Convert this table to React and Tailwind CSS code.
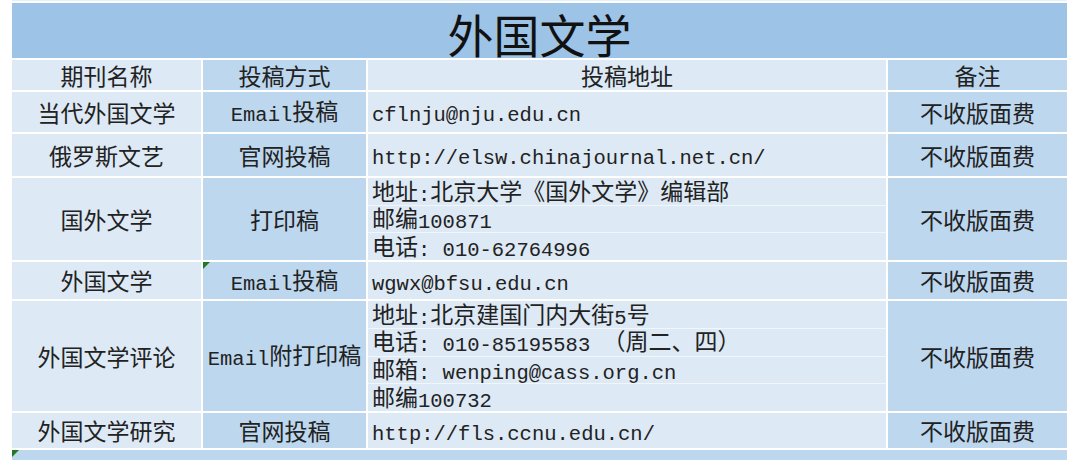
import React from "react";

const CJK = "font-['Noto_Sans_CJK_SC',sans-serif]";

// split ascii runs into the mono face, CJK stays in the CJK face
function Mixed({ text }) {
  return text.split(/([\x20-\x7e]+)/).map((s, i) =>
    /^[\x20-\x7e]+$/.test(s) ? (
      <span key={i} className="relative top-[1px] font-['Liberation_Mono',monospace] text-[20.5px] leading-none">
        {s}
      </span>
    ) : (
      <span key={i}>{s}</span>
    )
  );
}

function Corner() {
  return (
    <span className="absolute left-0 top-0 h-0 w-0 border-t-[7px] border-r-[7px] border-t-[#217a21] border-r-transparent" />
  );
}

const light = "bg-[#dde9f5]";
const mid = "bg-[#bdd7ee]";

const rows = [
  { name: "当代外国文学", way: "Email投稿", addr: ["cflnju@nju.edu.cn"], h: "h-[40px]" },
  { name: "俄罗斯文艺", way: "官网投稿", addr: ["http://elsw.chinajournal.net.cn/"], h: "h-[42px]" },
  {
    name: "国外文学",
    way: "打印稿",
    addr: ["地址:北京大学《国外文学》编辑部", "邮编100871", "电话: 010-62764996"],
    h: "h-[82px]",
  },
  { name: "外国文学", way: "Email投稿", addr: ["wgwx@bfsu.edu.cn"], h: "h-[37px]", mark: true },
  {
    name: "外国文学评论",
    way: "Email附打印稿",
    addr: ["地址:北京建国门内大街5号", "电话: 010-85195583 （周二、四）", "邮箱: wenping@cass.org.cn", "邮编100732"],
    h: "h-[110px]",
  },
  { name: "外国文学研究", way: "官网投稿", addr: ["http://fls.ccnu.edu.cn/"], h: "h-[35px]" },
];

export default function App() {
  return (
    <div className={`w-[1080px] h-[460px] overflow-hidden bg-white text-[#222] text-[23px] leading-[25px] ${CJK}`}>
      <div className="ml-[12px] w-[1055px] flex flex-col gap-[2px]">
        <div className="h-[1px] bg-[#e6eef7]" />
        <div className="h-[55px] bg-[#9dc3e6] flex items-center justify-center pt-[4px] text-[46px] leading-[50px] text-[#111]">
          外国文学
        </div>

        <div className="grid grid-cols-[189px_163px_518px_179px] grid-rows-[30px] gap-[2px] h-[30px]">
          <div className={`${light} flex items-center justify-center`}>期刊名称</div>
          <div className={`${mid} flex items-center justify-center`}>投稿方式</div>
          <div className={`${light} flex items-center justify-center`}>投稿地址</div>
          <div className={`${mid} flex items-center justify-center`}>备注</div>
        </div>

        {rows.map((r) => (
          <div key={r.name} className={`grid grid-cols-[189px_163px_518px_179px] grid-rows-[100%] gap-[2px] ${r.h}`}>
            <div className={`${light} flex items-center justify-center`}>{r.name}</div>
            <div className={`${mid} relative flex items-center justify-center`}>
              {r.mark && <Corner />}
              <span>
                <Mixed text={r.way} />
              </span>
            </div>
            <div className="flex flex-col gap-px bg-[#f1f6fb] min-h-0">
              {r.addr.map((a) => (
                <div key={a} className={`${light} flex-1 basis-0 min-h-0 flex items-center pl-[4px]`}>
                  <span>
                    <Mixed text={a} />
                  </span>
                </div>
              ))}
            </div>
            <div className={`${mid} flex items-center justify-center`}>不收版面费</div>
          </div>
        ))}

        <div className={`${mid} relative h-[12px]`}>
          <Corner />
        </div>
      </div>
    </div>
  );
}
